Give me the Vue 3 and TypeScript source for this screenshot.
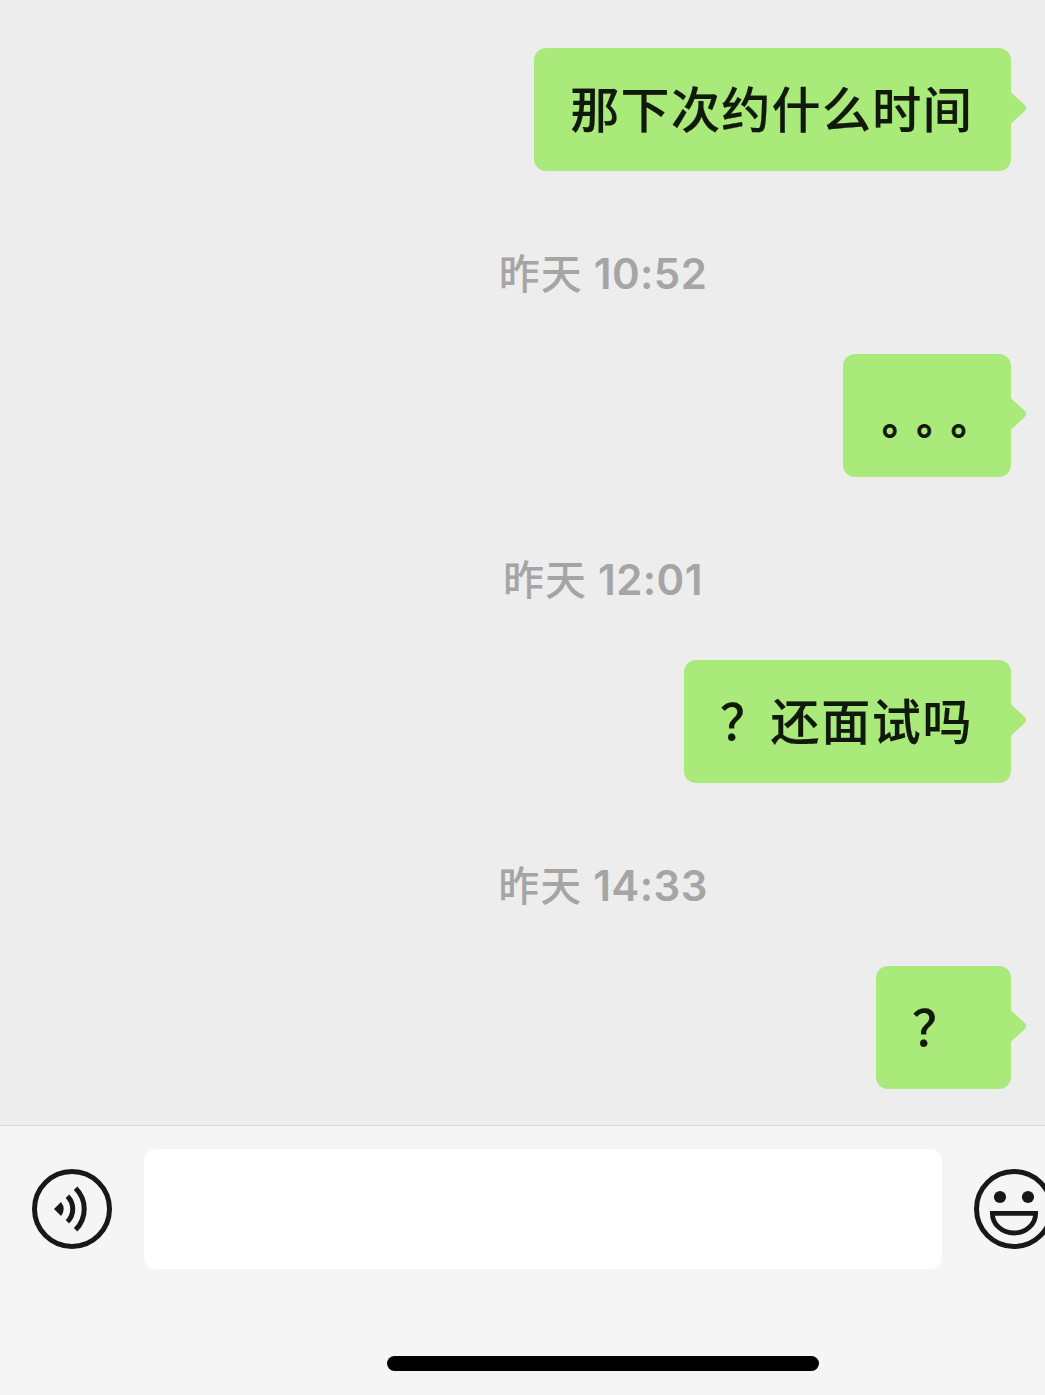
<template>
  <div class="viewport">
    <div class="phone">
      <main class="chat">
        <template v-for="message in messages" :key="message.id">
          <time v-if="message.time" class="timestamp">
            <span class="day">{{ message.day }}</span>
            <span class="clock">{{ message.time }}</span>
          </time>
          <div class="bubble">
            <p class="text" :class="message.kind">{{ message.text }}</p>
            <svg class="tail" width="16" height="34" viewBox="0 0 16 34">
              <path d="M0 1 L1 2.2 L13.6 13.8 Q16.8 17 13.6 20.2 L1 31.8 L0 33 Z" fill="#a9ea7a" />
            </svg>
          </div>
        </template>
      </main>

      <footer class="toolbar">
        <div class="controls">
          <button type="button" class="icon" aria-label="语音">
            <svg width="80" height="80" viewBox="0 0 80 80" fill="none" stroke="#181818">
              <circle cx="40" cy="40" r="37.5" stroke-width="5" />
              <path d="M22 40 L29 33 Q34.4 40 29 47 Z" fill="#181818" stroke="none" />
              <path d="M35.4 27.2 A18 18 0 0 1 35.4 52.8" stroke-width="5" />
              <path d="M43.6 19.2 A29.4 29.4 0 0 1 43.6 60.8" stroke-width="5" />
            </svg>
          </button>
          <input v-model="draft" class="field" type="text" />
          <button type="button" class="icon" aria-label="表情">
            <svg width="80" height="80" viewBox="0 0 80 80" fill="none" stroke="#181818">
              <circle cx="40" cy="40" r="37.5" stroke-width="5" />
              <circle cx="26" cy="28" r="6.1" fill="#181818" stroke="none" />
              <circle cx="54" cy="28" r="6.1" fill="#181818" stroke="none" />
              <path d="M18.4 44.4 H61.6 A21.6 19.6 0 0 1 18.4 44.4 Z" stroke-width="4.8" />
            </svg>
          </button>
        </div>
        <div class="home-indicator"></div>
      </footer>
    </div>
  </div>
</template>

<script lang="ts" setup>
import { ref } from "vue";

interface Message {
  id: number;
  text: string;
  day?: string;
  time?: string;
  kind?: 'dots' | 'question';
}

const draft = ref<string>('');

const messages: Message[] = [
  { id: 1, text: '那下次约什么时间' },
  { id: 2, text: '。。。', day: '昨天', time: '10:52', kind: 'dots' },
  { id: 3, text: '？还面试吗', day: '昨天', time: '12:01', kind: 'question' },
  { id: 4, text: '？', day: '昨天', time: '14:33', kind: 'question' },
];
</script>

<style>
body {
  margin: 0;
  background: #ededed;
}
</style>

<style scoped>
.viewport {
  width: 100%;
  height: 1395px;
  overflow: hidden;
}

/* the screen is wider than the window, so its right edge is cut off */
.phone {
  display: flex;
  flex-direction: column;
  width: 1206px;
  height: 1395px;
  background: #ededed;
  font-family: Inter, "Noto Sans CJK SC", sans-serif;
}

.chat {
  display: flex;
  flex-direction: column;
  box-sizing: border-box;
  height: 1125px;
  padding: 48px 195px 0 0;
}

.timestamp {
  display: flex;
  justify-content: center;
  align-items: center;
  gap: 11px;
  width: 1206px;
  height: 183px;
  padding-top: 22px;
  box-sizing: border-box;
  color: #a5a5a5;
  font-size: 42px;
  font-weight: 600;
  line-height: 60px;
}

.day {
  padding-bottom: 5px;
  font-family: "Noto Sans CJK SC", sans-serif;
  font-size: 41px;
  font-weight: 500;
  letter-spacing: 1px;
}

.clock {
  letter-spacing: 0.4px;
}

.bubble {
  position: relative;
  align-self: flex-end;
  box-sizing: border-box;
  min-width: 135px;
  height: 123px;
  padding: 24px 38px 26px 36px;
  border-radius: 12px;
  background: #a9ea7a;
}

.text {
  margin: 0;
  color: #10190b;
  font-family: "Noto Sans CJK SC", sans-serif;
  font-size: 49px;
  font-weight: 500;
  line-height: 70px;
  letter-spacing: 1.35px;
  white-space: nowrap;
  -webkit-text-stroke: 0.2px #10190b;
}

.dots {
  width: 94px;
  padding: 4px 0 0 3px;
  box-sizing: border-box;
  font-size: 40px;
  letter-spacing: 14.4px;
  -webkit-text-stroke-width: 1.2px;
}

.question {
  letter-spacing: 1.6px;
}

.tail {
  position: absolute;
  top: 43px;
  left: 100%;
}

.toolbar {
  display: flex;
  flex-direction: column;
  justify-content: space-between;
  box-sizing: border-box;
  height: 270px;
  padding: 23px 0 24px;
  border-top: 1px solid #d9d9d9;
  background: #f5f5f5;
}

.controls {
  display: flex;
  align-items: center;
  gap: 32px;
  padding-left: 32px;
}

.icon {
  display: flex;
  padding: 0;
  border: none;
  background: none;
}

.field {
  box-sizing: border-box;
  width: 798px;
  height: 120px;
  padding: 0 32px;
  border: none;
  border-radius: 12px;
  background: #fff;
  font-family: inherit;
  font-size: 49px;
  outline: none;
}

.home-indicator {
  align-self: center;
  width: 432px;
  height: 15px;
  border-radius: 8px;
  background: #000;
}
</style>
